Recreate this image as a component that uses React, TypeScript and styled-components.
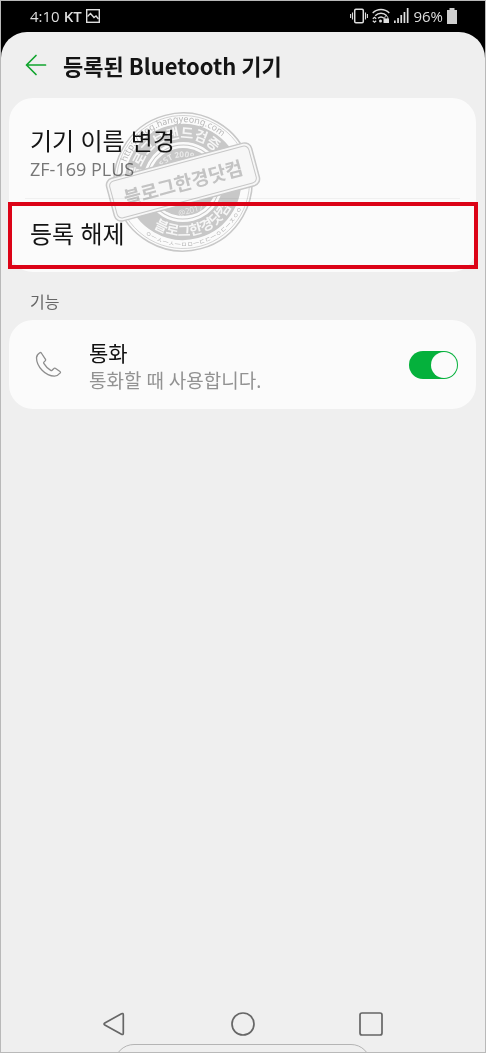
import React, { useState } from "react";
import styled, { createGlobalStyle } from "styled-components";

const GlobalStyle = createGlobalStyle`
  * { box-sizing: border-box; }
  body {
    margin: 0;
    background: #efefef;
    font-family: "Noto Sans", "Noto Sans CJK KR", sans-serif;
    color: #141414;
  }
  h1, h2, p { margin: 0; }
  button { font-family: inherit; color: inherit; background: none; border: 0; padding: 0; cursor: pointer; }
  svg { display: block; }
`;

const Screen = styled.div`
  display: flex;
  flex-direction: column;
  min-height: 100vh;
  border: 1px solid #b9b9b9;
  background: #000;
`;

const StatusBar = styled.header`
  display: flex;
  align-items: center;
  justify-content: space-between;
  height: 31px;
  padding: 0 28px 2px 29px;
  color: #dedede;
  font-family: "Open Sans", sans-serif;
  font-size: 15px;
  line-height: 20px;
`;

const StatusGroup = styled.div`
  display: flex;
  align-items: center;
  gap: 4px;
`;

const Carrier = styled.span`
  font-weight: 600;
`;

const Panel = styled.main`
  flex: 1;
  display: flex;
  flex-direction: column;
  padding: 0 9px 0 8px;
  border-radius: 26px 26px 0 0;
  background: #efefef;
`;

const TitleBar = styled.div`
  display: flex;
  align-items: center;
  gap: 16px;
  height: 66px;
  padding: 0 16px;
`;

const Title = styled.h1`
  font-family: "Noto Sans CJK KR", sans-serif;
  font-size: 22px;
  line-height: 32px;
  font-weight: 600;
  white-space: nowrap;
`;

const Card = styled.section`
  position: relative;
  border-radius: 24px;
  background: #fbfbfb;
`;

const Item = styled.button<{ $height: number }>`
  display: flex;
  flex-direction: column;
  align-items: flex-start;
  width: 100%;
  height: ${(p) => p.$height}px;
  padding: 0 21px;
  text-align: left;
`;

const RenameItem = styled(Item)`
  padding-top: 27px;
`;

const UnpairItem = styled(Item)`
  padding-top: 19px;
`;

const Divider = styled.hr`
  height: 1px;
  margin: 0 16px;
  border: 0;
  background: #f0f0f0;
`;

const ItemName = styled.span`
  font-size: 24px;
  line-height: 32px;
`;

const ItemValue = styled.span`
  color: #777;
  font-family: "Open Sans", sans-serif;
  font-size: 18px;
  line-height: 24px;
`;

const Highlight = styled.div`
  position: absolute;
  inset: auto -2px 3px -1px;
  height: 67px;
  border: 4px solid #dc0317;
  pointer-events: none;
`;

const Stamp = styled.svg`
  position: absolute;
  left: 92px;
  top: 2px;
  mix-blend-mode: multiply;
  pointer-events: none;
`;

const SectionLabel = styled.h2`
  padding: 18px 21px 6px;
  color: #666;
  font-size: 16px;
  line-height: 24px;
  font-weight: 400;
`;

const FeatureRow = styled.label`
  display: flex;
  align-items: center;
  height: 89px;
  padding: 0 18px 0 26px;
`;

const FeatureText = styled.span`
  flex: 1;
  display: flex;
  flex-direction: column;
  padding: 4px 0 0 27px;
`;

const FeatureName = styled.span`
  color: #111;
  font-size: 21px;
  line-height: 28px;
`;

const FeatureHint = styled.span`
  color: #929292;
  font-size: 19px;
  line-height: 28px;
`;

const Switch = styled.input`
  appearance: none;
  display: flex;
  align-items: center;
  width: 49px;
  height: 28px;
  margin: 0;
  padding: 0 1px;
  border-radius: 14px;
  background: #aaa;
  cursor: pointer;
  &::before {
    content: "";
    width: 26px;
    height: 26px;
    border-radius: 50%;
    background: #fbfbfb;
  }
  &:checked {
    justify-content: flex-end;
    background: #05b13c;
  }
`;

const NavBar = styled.nav`
  display: flex;
  justify-content: space-between;
  align-items: center;
  height: 40px;
  margin-top: auto;
  padding: 0 20%;
`;

const Handle = styled.div`
  align-self: center;
  width: 55%;
  height: 8px;
  overflow: hidden;
  &::before {
    content: "";
    display: block;
    height: 40px;
    border: 1px solid #b4b4b4;
    border-radius: 20px;
  }
`;

const PictureIcon = () => (
  <svg width="14" height="14" viewBox="0 0 14 14" fill="none" stroke="#dedede" strokeWidth="1.4">
    <rect x=".7" y=".7" width="12.6" height="12.6" />
    <path d="M1.500 7.500L4.500 4.500l3.500 4 2-1.500 2.500 3" />
  </svg>
);

const VibrateIcon = () => (
  <svg width="18" height="16" viewBox="0 0 18 16" fill="none" stroke="#dedede">
    <rect x="4.7" y="1.2" width="8.6" height="13.6" rx="1.2" strokeWidth="1.5" />
    <path d="M2.5 4.500v7M.6 6v4M15.500 4.500v7M17.400 6v4" strokeWidth="1.1" />
  </svg>
);

const WifiIcon = () => (
  <svg width="18" height="16" viewBox="0 0 18 16" fill="none" stroke="#dedede" strokeWidth="1.4">
    <path d="M.7 5C5.500.3 12.500.3 17.300 5M3.200 7.700c3.300-3.200 8.300-3.200 11.600 0M6 10.300c1.800-1.600 4.200-1.600 6 0" />
    <circle cx="8.500" cy="13" r="1.500" fill="#dedede" stroke="none" />
    <path d="M.8 10.800l1.700-1.500 1.700 1.500M.8 12.700l1.700 1.500 1.700-1.500" strokeWidth="1.200" />
    <path d="M12.800 11V9.500c0-2 3-2 3 0V11" strokeWidth="1" />
    <rect x="11.500" y="10.500" width="5.500" height="4.500" fill="#dedede" stroke="none" />
  </svg>
);

const SignalIcon = () => (
  <svg width="15" height="15" viewBox="0 0 15 15" fill="#dedede">
    <rect x="0" y="12.500" width="1.700" height="2.500" />
    <rect x="3.200" y="10" width="1.700" height="5" />
    <rect x="6.400" y="7" width="1.700" height="8" />
    <rect x="9.600" y="4" width="1.700" height="11" />
    <rect x="12.800" y="0" width="1.700" height="15" />
  </svg>
);

const BatteryIcon = () => (
  <svg width="10" height="16" viewBox="0 0 10 16" fill="#d0d0d0">
    <path d="M2.500 0h5v2H10v14H0V2h2.500z" />
  </svg>
);

const BackIcon = () => (
  <svg width="22" height="22" viewBox="0 0 22 22" fill="none" stroke="#12a52f" strokeWidth="1.700" strokeLinecap="round" strokeLinejoin="round">
    <path d="M11 1.500L1.500 11l9.500 9.500M1.500 11h19" />
  </svg>
);

const PhoneIcon = () => (
  <svg width="27" height="27" viewBox="0 0 27 27" fill="none" stroke="#8d8d8d" strokeWidth="1.300" strokeLinejoin="round">
    <path d="M4.800 1.800C3.300 2.800 1.500 4.500 1.500 6.800c0 8.800 9 18.400 18 18.400 2.300 0 4.500-1.800 5.800-3.300.4-.5.200-1-.3-1.400l-4.700-3.200c-.5-.3-1-.3-1.400.2l-1.800 1.800c-.4.400-.9.400-1.400.1-2.900-1.800-5.200-4.100-6.900-7-.3-.5-.3-.9.100-1.300l1.500-1.500c.4-.4.400-.8.100-1.300L6.300 2c-.4-.5-.9-.6-1.500-.2z" />
  </svg>
);

const StampMark = () => (
  <Stamp width="164" height="160" viewBox="-82 -82 164 160" fill="none" stroke="#cbcbcb" aria-hidden="true">
    <defs>
      <path id="ring-url" d="M-60 0A60 60 0 0 1 60 0" />
      <path id="ring-top" d="M-44 0A44 44 0 0 1 44 0" />
      <path id="ring-est" d="M-25 0A25 25 0 0 1 25 0" />
      <path id="ring-name" d="M-54 0A54 54 0 0 0 54 0" />
      <path id="ring-jamo" d="M-65 0A65 65 0 0 0 65 0" />
    </defs>
    <g transform="rotate(-15)">
      <circle r="69" strokeWidth="1.500" />
      <circle r="66.500" strokeWidth=".7" />
      <circle r="49" strokeWidth="18" />
      <circle r="37" strokeWidth="1" />
      <circle r="34" fill="#cbcbcb" stroke="none" />
      <g stroke="none" textAnchor="middle" fontFamily="Noto Sans, Noto Sans CJK KR, sans-serif">
        <text fontSize="9" fill="#bcbcbc">
          <textPath href="#ring-url" startOffset="50%">http://blog.hangyeong.com</textPath>
        </text>
        <text fontSize="14" fontWeight="700" fill="#fafafa">
          <textPath href="#ring-top" startOffset="47%">블로그브랜드검증</textPath>
        </text>
        <text fontSize="8" fontWeight="700" fill="#eee">
          <textPath href="#ring-est" startOffset="50%">EST 2009</textPath>
        </text>
        <text fontSize="14" fontWeight="700" fill="#fafafa">
          <textPath href="#ring-name" startOffset="50%">블로그한경닷컴</textPath>
        </text>
        <text fontSize="7" fill="#bcbcbc">
          <textPath href="#ring-jamo" startOffset="50%">ㅇㅡㅅㅡㅅㅡㅁㅁㅡㄷㄷㅡㅇㄷㅡㅈㅇㅇ</textPath>
        </text>
        <text y="32" fontSize="8" fill="#eee">@2017</text>
      </g>
      <rect x="-75" y="-22" width="150" height="44" rx="7" fill="#fbfbfb" strokeWidth="1.500" />
      <rect x="-72" y="-19" width="144" height="38" rx="5" strokeWidth="1" />
      <text y="8" textAnchor="middle" fontSize="19" fontWeight="700" fill="#c6c6c6" stroke="none" fontFamily="Noto Sans CJK KR, sans-serif">
        블로그한경닷컴
      </text>
    </g>
  </Stamp>
);

export default function App() {
  const [calls, setCalls] = useState(true);
  return (
    <Screen>
      <GlobalStyle />
      <StatusBar>
        <StatusGroup>
          <span>4:10</span>
          <Carrier>KT</Carrier>
          <PictureIcon />
        </StatusGroup>
        <StatusGroup>
          <VibrateIcon />
          <WifiIcon />
          <SignalIcon />
          <span>96%</span>
          <BatteryIcon />
        </StatusGroup>
      </StatusBar>
      <Panel>
        <TitleBar>
          <button aria-label="뒤로">
            <BackIcon />
          </button>
          <Title>등록된 Bluetooth 기기</Title>
        </TitleBar>
        <Card>
          <RenameItem $height={100}>
            <ItemName>기기 이름 변경</ItemName>
            <ItemValue>ZF-169 PLUS</ItemValue>
          </RenameItem>
          <Divider />
          <UnpairItem $height={73}>
            <ItemName>등록 해제</ItemName>
          </UnpairItem>
          <StampMark />
          <Highlight />
        </Card>
        <SectionLabel>기능</SectionLabel>
        <Card>
          <FeatureRow>
            <PhoneIcon />
            <FeatureText>
              <FeatureName>통화</FeatureName>
              <FeatureHint>통화할 때 사용합니다.</FeatureHint>
            </FeatureText>
            <Switch type="checkbox" checked={calls} onChange={() => setCalls(!calls)} />
          </FeatureRow>
        </Card>
        <NavBar>
          <button aria-label="뒤로 가기">
            <svg width="24" height="24" viewBox="0 0 24 24" fill="none" stroke="#666" strokeWidth="1.700" strokeLinejoin="round">
              <path d="M2.800 11c-1 .6-1 1.500 0 2l16.700 9.300c1 .5 1.800.1 1.800-1V2.700c0-1.100-.8-1.500-1.800-1z" />
            </svg>
          </button>
          <button aria-label="홈">
            <svg width="24" height="24" viewBox="0 0 24 24" fill="none" stroke="#666" strokeWidth="1.700">
              <circle cx="12" cy="12" r="11" />
            </svg>
          </button>
          <button aria-label="최근 앱">
            <svg width="24" height="24" viewBox="0 0 24 24" fill="none" stroke="#666" strokeWidth="1.700">
              <rect x="1" y="1" width="22" height="22" rx="2" />
            </svg>
          </button>
        </NavBar>
        <Handle />
      </Panel>
    </Screen>
  );
}
